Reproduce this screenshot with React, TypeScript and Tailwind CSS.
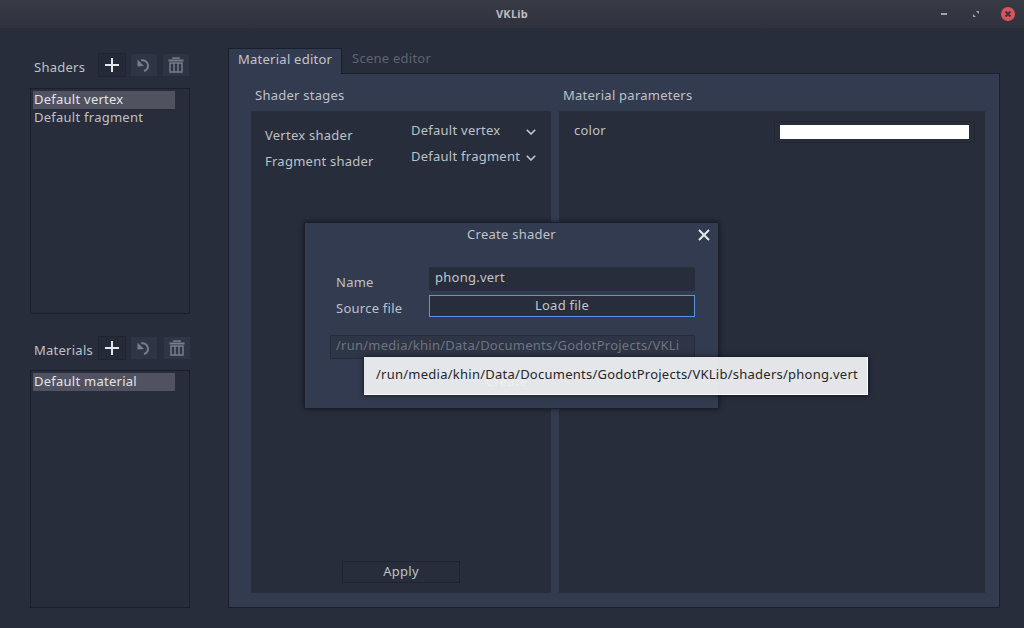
const font = "font-['Noto_Sans','Open_Sans',sans-serif]";

function Plus() {
  return (
    <svg width="16" height="16" viewBox="0 0 16 16">
      <path d="M8 1v14M1 8h14" stroke="#e6e7ea" strokeWidth="2" />
    </svg>
  );
}

function Undo() {
  return (
    <svg width="16" height="16" viewBox="0 0 16 16" fill="none">
      <path d="M5 3.4A5.4 5.4 0 1 1 8 14" stroke="#777c88" strokeWidth="2" />
      <path d="M1.5 9.5V2.5l6.5 6.5z" fill="#777c88" />
    </svg>
  );
}

function Trash() {
  return (
    <svg width="16" height="16" viewBox="0 0 16 16" fill="none" stroke="#777c88">
      <path d="M0.5 3.5h15" strokeWidth="2" />
      <path d="M5 2V1h6v1" strokeWidth="1.5" />
      <path d="M2 6h12v9H2z" strokeWidth="1.5" />
      <path d="M6 6v9M10 6v9" strokeWidth="1.5" />
    </svg>
  );
}

function Chevron() {
  return (
    <svg width="10" height="6" viewBox="0 0 10 6" fill="none">
      <path d="M0.8 0.8L5 5l4.2-4.2" stroke="#c6c8cd" strokeWidth="1.6" />
    </svg>
  );
}

function ToolRow({ label, gap }: { label: string; gap: string }) {
  return (
    <div className="flex items-center h-6 pl-1">
      <span className="w-[64px] text-[#bfc1c7] pt-[5px]">{label}</span>
      <button className="w-7 h-6 flex items-center justify-center bg-[#252a38] border border-[#1f2431]">
        <Plus />
      </button>
      <button className="ml-[5px] w-[26px] h-[22px] flex items-center justify-center bg-[#2f3544]">
        <Undo />
      </button>
      <button className={`${gap} w-[26px] h-[22px] flex items-center justify-center bg-[#2f3544]`}>
        <Trash />
      </button>
    </div>
  );
}

function ListBox({ items, className }: { items: string[]; className: string }) {
  return (
    <div className={`${className} border border-[#1b1f2b] pt-[2px] pl-[2px] leading-[16px] text-[#bfc1c7]`}>
      {items.map((item, i) => (
        <div
          key={item}
          className={i === 0 ? "w-[142px] h-[18px] pl-[1px] bg-[#50525f] text-[#e2e3e6]" : "w-[142px] h-[18px] pl-[1px]"}
        >
          {item}
        </div>
      ))}
    </div>
  );
}

export default function App() {
  return (
    <div className={`${font} relative w-[1024px] h-[628px] overflow-hidden bg-[#272d3b] text-[13px] tracking-[0.25px]`}>
      {/* title bar */}
      <div className="relative h-[28px] flex items-center justify-center bg-gradient-to-b from-[#383b44] to-[#2f323c] text-[11px] font-bold text-[#b9bbc1]">
        VKLib
        <div className="absolute right-[9px] top-[7px] flex items-center">
          <div className="w-[6px] h-[2px] bg-[#a3a5ad]" />
          <svg className="ml-[26px]" width="6" height="6" viewBox="0 0 6 6">
            <path d="M3 0h3v3zM0 3l3 3H0z" fill="#a3a5ad" />
          </svg>
          <svg className="ml-[22px]" width="14" height="14" viewBox="0 0 14 14">
            <circle cx="7" cy="7" r="7" fill="#d9545c" />
            <path d="M4.5 4.5l5 5M9.5 4.5l-5 5" stroke="#3a3540" strokeWidth="1.8" />
          </svg>
        </div>
      </div>

      <div className="flex pl-[30px] pt-[20px]">
        {/* left column */}
        <div className="w-[160px] mr-[38px] flex flex-col mt-[5px]">
          <ToolRow label="Shaders" gap="ml-[6px]" />
          <ListBox items={["Default vertex", "Default fragment"]} className="mt-[11px] h-[226px]" />
          <div className="h-[22px]" />
          <ToolRow label="Materials" gap="ml-[7px]" />
          <ListBox items={["Default material"]} className="mt-[10px] h-[238px]" />
        </div>

        {/* tabs */}
        <div className="w-[772px] flex flex-col">
          <div className="relative z-10 flex h-[26px] -mb-[1px]">
            <div className="w-[114px] h-[26px] pl-[9px] leading-[21px] bg-[#333b50] border-t border-l border-r border-[#1b1f2b] text-[#c3c5ca]">
              Material editor
            </div>
            <div className="pl-[10px] leading-[21px] text-[#5f6470]">Scene editor</div>
          </div>
          <div className="h-[535px] bg-[#333b50] border border-[#1b1f2b] pl-[22px] pr-[14px]">
            <div className="flex h-[37px] items-center text-[#bfc1c7]">
              <div className="w-[308px] pl-[4px] mt-[6px]">Shader stages</div>
              <div className="pl-[4px] mt-[6px]">Material parameters</div>
            </div>
            <div className="flex gap-[8px]">
              <div className="w-[300px] h-[482px] bg-[#272d3b] flex flex-col px-[14px] text-[#bfc1c7]">
                <div className="flex mt-[10px] h-[26px]">
                  <div className="w-[146px] pt-[5px]">Vertex shader</div>
                  <div className="w-[115px]">Default vertex</div>
                  <div className="pt-[8px]"><Chevron /></div>
                </div>
                <div className="flex h-[26px]">
                  <div className="w-[146px] pt-[5px]">Fragment shader</div>
                  <div className="w-[115px] whitespace-nowrap">Default fragment</div>
                  <div className="pt-[8px]"><Chevron /></div>
                </div>
                <div className="mt-auto mb-[10px] ml-[77px] w-[118px] h-[22px] border border-[#20242f] flex items-center justify-center">
                  Apply
                </div>
              </div>
              <div className="flex-1 h-[482px] bg-[#272d3b] text-[#bfc1c7]">
                <div className="flex items-start pt-[10px] pl-[15px]">
                  <span className="w-[200px]">color</span>
                  <div className="w-[201px] h-[22px] border border-[#22262f] px-[5px] py-[3px]">
                    <div className="h-[14px] bg-white" />
                  </div>
                </div>
              </div>
            </div>
          </div>
        </div>
      </div>

      {/* create shader dialog */}
      <div className="absolute left-[304px] top-[222px] w-[415px] h-[187px] bg-[#333b50] border border-[#1b1f2b] shadow-[0_0_5px_rgba(0,0,0,0.55)] text-[#bfc1c7]">
        <div className="relative mt-[1px] h-[20px] leading-[20px] text-center">
          Create shader
          <svg className="absolute left-[393px] top-[5px]" width="12" height="12" viewBox="0 0 12 12">
            <path d="M1 1l10 10M11 1L1 11" stroke="#e6e7ea" strokeWidth="2" />
          </svg>
        </div>
        <div className="mt-[23px] ml-[31px] flex flex-col">
          <div className="flex h-[24px]">
            <span className="w-[93px] pt-[6px]">Name</span>
            <div className="w-[266px] h-[24px] pl-[5px] leading-[18px] bg-[#272d3b] border border-[#2a2f3d] text-[#c3c5ca]">phong.vert</div>
          </div>
          <div className="flex h-[22px] mt-[4px]">
            <span className="w-[93px] pt-[4px]">Source file</span>
            <button className="w-[266px] h-[22px] leading-[16px] pb-[2px] bg-[#272d3b] border border-[#5d94e0] text-[#c3c5ca]">Load file</button>
          </div>
        </div>
        <div className="mt-[18px] ml-[25px] w-[365px] h-[24px] pl-[5px] leading-[18px] bg-[#2e3546] border border-[#272c3a] text-[#6f7480] overflow-hidden whitespace-nowrap">
          /run/media/khin/Data/Documents/GodotProjects/VKLi
        </div>
        <div className="mt-[12px] ml-[168px] w-[67px] h-[22px] leading-[20px] text-center text-[#e6e7ea]">Create</div>
      </div>

      {/* tooltip */}
      <div className="absolute left-[364px] top-[357px] w-[504px] h-[38px] pl-[12px] leading-[35px] bg-[#eeeff1]/95 border-b border-r border-white shadow-[0_0_5px_rgba(0,0,0,0.7)] text-[#26272b] whitespace-nowrap">
        /run/media/khin/Data/Documents/GodotProjects/VKLib/shaders/phong.vert
      </div>
    </div>
  );
}
